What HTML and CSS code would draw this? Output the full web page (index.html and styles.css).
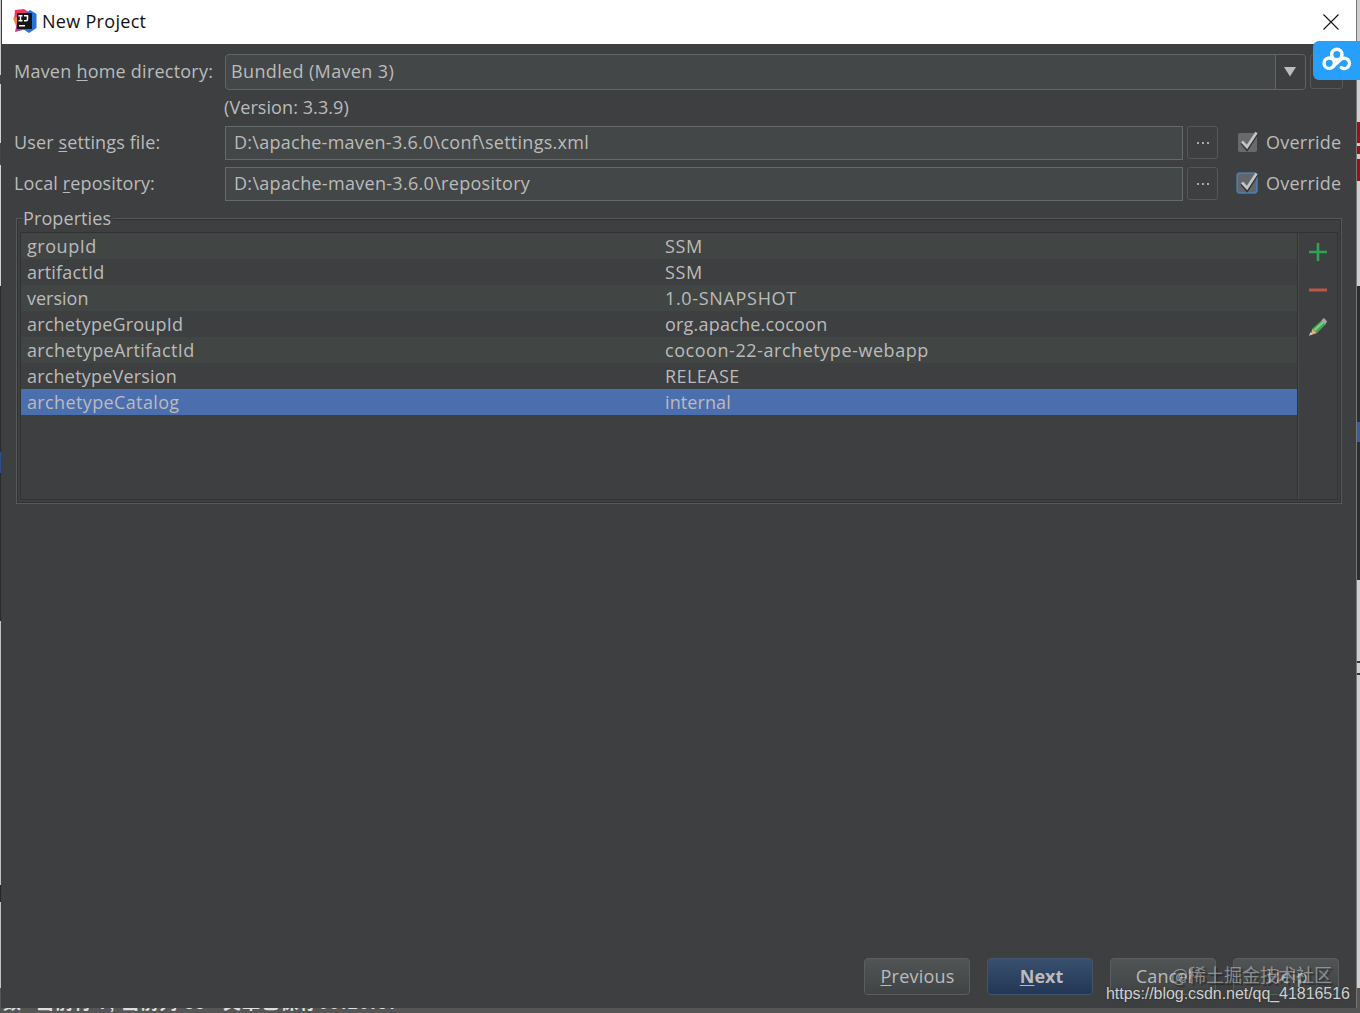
FILE: index.html
```
<!DOCTYPE html>
<html lang="en">
<head>
    <meta charset="UTF-8">
    <title>New Project</title>
    <link rel="stylesheet" href="styles.css">
</head>
<body>
    <div class="desktop">
        <div class="edge edge-left"></div>
        <div class="dialog">
            <div class="titlebar">
                <svg class="logo" width="24" height="24" viewBox="0 0 24 24">
                    <path d="M2 1L11 0l6 4-4 12-12-4z" fill="#ec3568"/>
                    <path d="M0 9l9-2v10H3z" fill="#f08a35"/>
                    <path d="M4 13l9 2 1 5-12 3z" fill="#a94592"/>
                    <path d="M13 4l4-3 6.5 4v14L16 24l-6-4z" fill="#2672de"/>
                    <path d="M4 4h15v16H4z" fill="#151515"/>
                    <path d="M5.5 6.7h4M7.5 6.7v5M5.5 11.7h4M11 6.7h3.5v3.5q0 1.5-1.5 1.5h-2M6 16.8h6" fill="none" stroke="#fff" stroke-width="1.5"/>
                </svg>
                <span class="title">New Project</span>
                <svg class="close" width="16" height="16" viewBox="0 0 16 16"><path d="M.5.5l15 15M15.5.5l-15 15" stroke="#111" stroke-width="1.1"/></svg>
            </div>

            <div class="content">
                <div class="form">
                    <label class="label l-home">Maven <u>h</u>ome directory:</label>
                    <div class="combo">
                        <span class="t-bundled">Bundled (Maven 3)</span>
                        <div class="arrow"><svg width="12" height="10" viewBox="0 0 12 10"><path d="M0 0h12L6 9.5z" fill="#bcbcbc"/></svg></div>
                    </div>
                    <div class="more more-top"></div>
                </div>
                <div class="version">(Version: 3.3.9)</div>
                <div class="form">
                    <label class="label l-user">User <u>s</u>ettings file:</label>
                    <div class="field"><span class="t-settings">D:\apache-maven-3.6.0\conf\settings.xml</span></div>
                    <div class="more"><i></i><i></i><i></i></div>
                    <svg class="check" width="24" height="24" viewBox="0 0 24 24">
                        <rect x="3" y="3" width="19" height="19" rx="2" fill="#686b6c"/>
                        <path d="M7 12.5l5 6L22 3" fill="none" stroke="#303234" stroke-width="4"/>
                        <path d="M7 11.5l5 5.5L21.5 2.5" fill="none" stroke="#c3c5c5" stroke-width="2.8"/>
                    </svg>
                    <span class="override">Override</span>
                </div>
                <div class="form form-last">
                    <label class="label l-repo">Local <u>r</u>epository:</label>
                    <div class="field"><span class="t-repo">D:\apache-maven-3.6.0\repository</span></div>
                    <div class="more"><i></i><i></i><i></i></div>
                    <svg class="check" width="24" height="24" viewBox="0 0 24 24">
                        <rect x="2.2" y="2.2" width="19.6" height="19.6" rx="2.5" fill="#626669" stroke="#4f7bab" stroke-width="1.8"/>
                        <path d="M7 12.5l5 6L22 3" fill="none" stroke="#303234" stroke-width="4"/>
                        <path d="M7 11.5l5 5.5L21.5 2.5" fill="none" stroke="#c3c5c5" stroke-width="2.8"/>
                    </svg>
                    <span class="override">Override</span>
                </div>

                <div class="group">
                    <div class="legend"><span>Properties</span></div>
                    <div class="panel">
                        <div class="table">
                            <div class="row"><span class="k1">groupId</span><span class="ssm">SSM</span></div>
                            <div class="row"><span class="k2">artifactId</span><span class="ssm">SSM</span></div>
                            <div class="row"><span class="k3">version</span><span class="v3">1.0-SNAPSHOT</span></div>
                            <div class="row"><span class="k4">archetypeGroupId</span><span class="v4">org.apache.cocoon</span></div>
                            <div class="row"><span class="k5">archetypeArtifactId</span><span class="v5">cocoon-22-archetype-webapp</span></div>
                            <div class="row"><span class="k6">archetypeVersion</span><span class="v6">RELEASE</span></div>
                            <div class="row selected"><span class="k7">archetypeCatalog</span><span class="v7">internal</span></div>
                        </div>
                        <div class="tools">
                            <svg width="20" height="20" viewBox="0 0 20 20"><path d="M10 1v18M1 10h18" stroke="#2aa550" stroke-width="2.6"/></svg>
                            <svg width="20" height="20" viewBox="0 0 20 20"><path d="M1 10h18" stroke="#bf5546" stroke-width="3"/></svg>
                            <svg width="20" height="20" viewBox="0 0 20 20">
                                <path d="M4 12L14 3l4 4-9 9z" fill="#45a858"/>
                                <path d="M5.5 12.5L15 4l1.3 1.3-9 8.8z" fill="#82cf84"/>
                                <path d="M13.5 3.3L16 1l3.2 3.5-2.2 3z" fill="#a3a6a7"/>
                                <path d="M4 12l5 4-6 2z" fill="#e5b178"/>
                                <path d="M2.5 15l2 2L1 19z" fill="#d1d1d1"/>
                            </svg>
                        </div>
                    </div>
                </div>

                <div class="buttons">
                    <button class="b-prev"><u>P</u>revious</button>
                    <button class="primary"><u>N</u>ext</button>
                    <button class="b-cancel">Cancel</button>
                    <button class="b-help">Help</button>
                </div>
            </div>
        </div>
        <div class="edge edge-right"></div>
        <div class="status"><span class="s1">数</span><span class="s2">当前行 7, 当前列 66</span><span class="s3">文章已保存09:20:57</span></div>
    </div>

    <!-- floating badge of the cloud drive -->
    <div class="badge">
        <svg width="30" height="24" viewBox="0 0 30 24" fill="none" stroke="#fff" stroke-width="3.4" stroke-linecap="round">
            <circle cx="14.8" cy="7.4" r="5.2"/>
            <circle cx="7.2" cy="16.2" r="5.2"/>
            <path d="M11 19.5L18.6 12.6A5.2 5.2 0 1 1 19.3 20.6"/>
        </svg>
    </div>
    <div class="mark mark-cn">@稀土掘金技术社区</div>
    <div class="mark mark-url">https://blog.csdn.net/qq_41816516</div>
</body>
</html>
```
FILE: styles.css
```
* { margin: 0; padding: 0; box-sizing: border-box; }
body {
    width: 1360px;
    height: 1013px;
    overflow: hidden;
    position: relative;
    background: #3d3f41;
    color: #bbb;
    font-family: "Open Sans", "Noto Sans CJK SC", sans-serif;
    font-size: 18px;
    white-space: nowrap;
}
u { text-decoration-thickness: 1px; text-underline-offset: 2px; }
.desktop {
    display: grid;
    grid-template-columns: 2px 1354px 4px;
    grid-template-rows: 1008px 5px;
}
.edge-left {
    background: linear-gradient(#c9cbcc 0 75px, #444 75px 84px, #d0d1d2 84px 143px, #444 143px 165px, #d0d1d2 165px 286px, #292b2d 286px 452px, #304f8f 452px 473px, #292b2d 473px 621px, #c2c4c4 621px 885px, #252729 885px 902px, #c2c4c4 902px 988px, #555 988px);
    border-right: 1px solid #3b3d3f;
}
.edge-right {
    background: linear-gradient(#d0cfd0 0 122px, #a40b19 122px 143px, #e5c5c8 143px 146px, #a40b19 146px 154px, #e5c5c8 154px 159px, #a40b19 159px 181px, #d0cfd0 181px 286px, #2b2d2f 286px 422px, #3b5d9e 422px 442px, #2b2d2f 442px 580px, #d0d0d0 580px 661px, #333 661px 663px, #d0d0d0 663px 673px, #333 673px 675px, #d0d0d0 675px 988px, #555 988px);
    border-left: 1px solid #777;
}
.dialog { display: flex; flex-direction: column; background: #3d3f41; }
.titlebar {
    height: 44px;
    background: #fff;
    display: flex;
    align-items: center;
    padding: 0 17px 2px 11px;
    color: #111;
}
.title { margin-left: 5px; flex: 1; letter-spacing: .3px; }
.close { position: relative; top: 1px; }
.content {
    flex: 1;
    display: flex;
    flex-direction: column;
    padding: 10px 15px 13px 12px;
}
.form { display: flex; align-items: center; height: 34px; margin-bottom: 7px; }
.form > * { flex-shrink: 0; }
.form:first-child { height: 36px; margin-bottom: 0; }
.form-last { margin-bottom: 5px; }
.label { width: 211px; padding-bottom: 2px; }
.combo {
    width: 1081px;
    height: 36px;
    display: flex;
    border: 1px solid #5f6465;
    border-radius: 4px;
    background: #434747;
    padding-left: 5px;
    line-height: 32px;
}
.combo span { flex: 1; }
.arrow {
    width: 30px;
    display: flex;
    align-items: center;
    justify-content: center;
    padding-right: 2px;
    background: #3d3f41;
    border-left: 1px solid #5f6465;
    border-radius: 0 4px 4px 0;
}
.version { height: 36px; line-height: 34px; padding-left: 210px; letter-spacing: .08px; }
.field {
    width: 958px;
    height: 34px;
    border: 1px solid #646969;
    background: #434747;
    padding-left: 8px;
    line-height: 31px;
}
.more {
    width: 31px;
    height: 33px;
    margin-left: 4px;
    margin-bottom: 1px;
    border: 1px solid #55585a;
    border-radius: 3px;
    display: flex;
    align-items: center;
    justify-content: center;
    gap: 3px;
}
.more-top { width: 33px; height: 35px; }
.more i { width: 2px; height: 2px; background: #aaa; }
.check { margin-left: 17px; margin-top: -2px; }
.override { margin-left: 7px; padding-bottom: 2px; letter-spacing: .25px; }

/* tracking of the single texts */
.l-home { letter-spacing: .23px; }
.l-user, .l-repo { letter-spacing: .12px; }
.t-bundled { letter-spacing: .36px; }
.t-settings { letter-spacing: .27px; }
.t-repo { letter-spacing: .3px; }
.ssm { letter-spacing: .6px; }
.k1 { letter-spacing: .55px; }
.k2 { letter-spacing: .2px; }
.k4, .k6, .v4 { letter-spacing: .2px; }
.k5, .k7 { letter-spacing: .37px; }
.v3 { letter-spacing: .67px; }
.v5 { letter-spacing: .55px; }
.v6 { letter-spacing: .4px; }
.v7 { letter-spacing: .1px; }

.group { height: 298px; margin: 0 -1px 0 2px; display: flex; flex-direction: column; }
.legend { height: 26px; line-height: 24px; display: flex; padding-left: 7px; margin-bottom: -14px; z-index: 1; }
.legend span { background: #3d3f41; padding-right: 2px; letter-spacing: .1px; }
.panel {
    height: 286px;
    display: flex;
    padding: 13px 3px 3px 3px;
    border: 1px solid #56595a;
    box-shadow: inset 1px 1px #303233, inset -1px -1px #303233;
}
.table { width: 1278px; border: 1px solid #303233; }
.row {
    height: 26px;
    line-height: 26px;
    display: grid;
    grid-template-columns: 638px 1fr;
    padding-left: 6px;
}
.row:nth-child(odd) { background: #414645; }
.row.selected { background: #4b6eaf; }
.row span { justify-self: start; }
.tools {
    flex: 1;
    border: 1px solid #303233;
    border-left-color: #484b4c;
    display: flex;
    flex-direction: column;
    align-items: center;
    gap: 17.5px;
    padding-top: 9px;
}
.buttons { margin-top: auto; display: flex; justify-content: flex-end; gap: 17px; padding-right: 2px; }
button {
    width: 106px;
    height: 37px;
    border: 1px solid #5b5e5f;
    border-radius: 4px;
    background: linear-gradient(#505455, #414445);
    color: #bbb;
    font: inherit;
    padding-bottom: 2px;
}
.b-prev { letter-spacing: .2px; padding-left: 1px; }
.b-cancel { letter-spacing: .1px; padding-left: 2px; }
.b-help { padding-left: 3px; letter-spacing: .5px; }
.primary {
    background: linear-gradient(#38506f, #243755);
    border-color: #43536a;
    font-weight: bold;
    padding-left: 3px;
}
.status {
    grid-column: 1 / 4;
    display: flex;
    align-items: flex-end;
    overflow: hidden;
    background: #555;
    color: #ddd;
    font: bold 18px/19px "Liberation Sans", "Noto Sans CJK SC", sans-serif;
    padding-left: 3px;
}
.s1 { width: 33px; }
.s2 { width: 187px; letter-spacing: .9px; }
.s3 { letter-spacing: 1.1px; }
.badge {
    position: absolute;
    left: 1313px;
    top: 41px;
    width: 47px;
    height: 39px;
    padding: 6px 0 0 9px;
    background: #27a0fb;
    border-radius: 6px 0 0 6px;
}
.badge svg { display: block; }
.mark { position: absolute; }
.mark-cn {
    left: 1171px;
    top: 961px;
    font: 18px/26px "Noto Sans CJK SC", sans-serif;
    color: rgba(190, 192, 194, .6);
    text-shadow: 2px 2px 1px rgba(30, 30, 30, .6);
}
.mark-url {
    left: 1106px;
    top: 984px;
    font: 16px/20px "Liberation Sans", Arial, sans-serif;
    letter-spacing: -.05px;
    color: #d0d1d2;
    text-shadow: 0 0 2px #222;
}
```
